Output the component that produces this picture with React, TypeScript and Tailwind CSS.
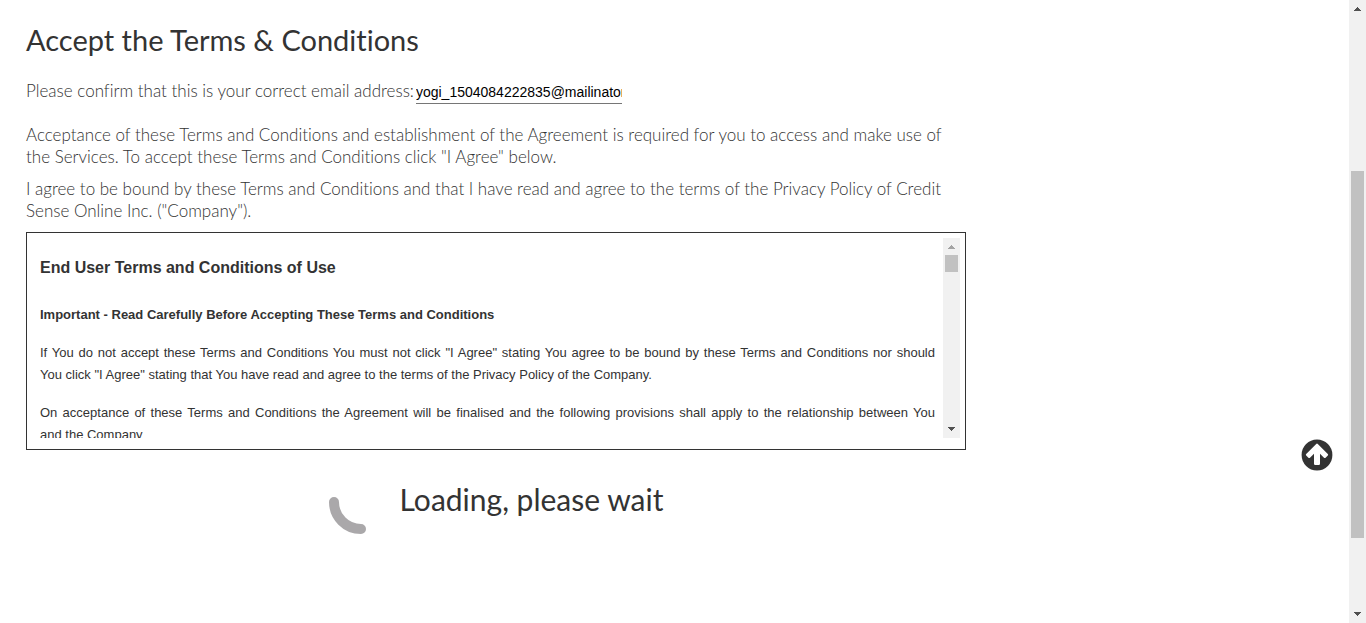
function Arrow({ down = false, color }: { down?: boolean; color: string }) {
  return (
    <svg width="17" height="17" viewBox="0 0 17 17" fill={color} shapeRendering="crispEdges" className="shrink-0" aria-hidden="true">
      {down ? (
        <path d="M5 6h7v1h-1v1h-1v1h-1v1h-1v-1h-1v-1h-1v-1h-1z" />
      ) : (
        <path d="M8 7h1v1h1v1h1v1h1v1h-7v-1h1v-1h1v-1h1z" />
      )}
    </svg>
  );
}

function Terms() {
  return (
    <section className="border border-[#333] px-[5px] pt-[5px] pb-[11px]">
      <div className="flex h-[200px]">
        <div className="min-w-0 flex-1 overflow-hidden pr-2 pl-2 font-['Liberation_Sans',Arial,sans-serif] text-[13px] leading-[22px] [&_p]:mb-4 [&_p]:text-justify">
          <h2 className="mt-[19px] mb-[25px] text-base leading-[22px] font-bold">End User Terms and Conditions of Use</h2>
          <h3 className="mb-4 font-bold">Important - Read Carefully Before Accepting These Terms and Conditions</h3>
          <p>
            <span className="block [text-align-last:justify]">
              If You do not accept these Terms and Conditions You must not click "I Agree" stating You agree to be bound by these Terms and Conditions nor should
            </span>{" "}
            You click "I Agree" stating that You have read and agree to the terms of the Privacy Policy of the Company.
          </p>
          <p>
            <span className="block [text-align-last:justify]">
              On acceptance of these Terms and Conditions the Agreement will be finalised and the following provisions shall apply to the relationship between You
            </span>{" "}
            and the Company
          </p>
        </div>
        <div className="flex w-[17px] shrink-0 flex-col items-center justify-between bg-[#f1f1f1]" aria-hidden="true">
          <div className="flex flex-col items-center">
            <Arrow color="#a3a3a3" />
            <div className="h-[17px] w-[13px] bg-[#c1c1c1]" />
          </div>
          <Arrow down color="#505050" />
        </div>
      </div>
    </section>
  );
}

export default function App() {
  return (
    <div className="flex h-screen overflow-hidden bg-white font-['Lato',sans-serif] text-[#333] [font-variant-ligatures:none]">
      <main className="min-w-0 flex-1 pt-[22px] pl-[26px]">
        <div className="max-w-[940px] text-[17px] leading-[22px] font-light">
          <h1 className="mb-5 text-[29px] leading-9 font-normal">Accept the Terms &amp; Conditions</h1>
          <div className="mb-5 flex items-start gap-0.5">
            <label htmlFor="email" className="leading-[26px]">
              Please confirm that this is your correct email address:
            </label>
            <input
              id="email"
              type="email"
              defaultValue="yogi_1504084222835@mailinator.com"
              className="h-[26px] w-[206px] border-b border-[#767676] pt-[3px] font-['Liberation_Sans',Arial,sans-serif] text-sm font-normal text-black outline-none"
            />
          </div>
          <p className="mb-[10px]">
            Acceptance of these Terms and Conditions and establishment of the Agreement is required for you to access and make use of the Services. To accept
            these Terms and Conditions click "I Agree" below.
          </p>
          <p className="mb-[10px]">
            I agree to be bound by these Terms and Conditions and that I have read and agree to the terms of the Privacy Policy of Credit Sense Online Inc.
            ("Company").
          </p>
          <Terms />
          <div className="mt-5 flex justify-center gap-[7px]" role="status">
            <svg width="64" height="64" viewBox="0 0 64 64" fill="none" stroke="#aaa8aa" strokeWidth="10" strokeLinecap="round" aria-hidden="true">
              <path d="M5 32A27 27 0 0 0 32 59" />
            </svg>
            <p className="pt-[11px] text-[30px] leading-9 font-normal">Loading, please wait</p>
          </div>
        </div>
      </main>
      <button type="button" aria-label="Back to top" className="fixed right-[33px] bottom-[152px]">
        <svg width="32" height="32" viewBox="0 0 32 32" aria-hidden="true">
          <circle cx="16" cy="16" r="15.4" fill="#333" />
          <path d="M15.2 4.900q.8-.8 1.6 0l10 10q.8.8 0 1.6l-2.200 2.200q-.8.8-1.600 0L19 14.700V24.800q0 1.200-1.200 1.200h-3.600q-1.200 0-1.200-1.200V14.700L9 18.700q-.8.8-1.600 0l-2.200-2.200q-.8-.8 0-1.600z" fill="#fff" />
        </svg>
      </button>
      <div className="flex w-[17px] shrink-0 flex-col items-center bg-[#f1f1f1]" aria-hidden="true">
        <Arrow color="#505050" />
        <div className="grow-[154]" />
        <div className="w-[13px] grow-[367] bg-[#c1c1c1]" />
        <div className="grow-[68]" />
        <Arrow down color="#505050" />
      </div>
    </div>
  );
}
